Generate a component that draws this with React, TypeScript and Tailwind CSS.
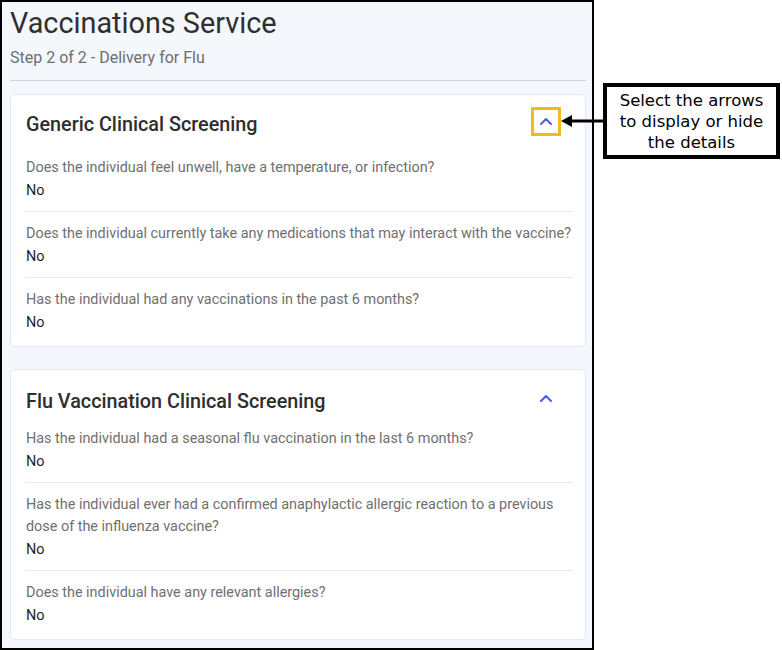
import React from 'react';

interface Question {
  text: string;
  answer: string;
}

interface Section {
  title: string;
  questions: Question[];
  headerClass: string;
}

const sections: Section[] = [
  {
    title: 'Generic Clinical Screening',
    headerClass: 'pt-[16px] mb-[7px]',
    questions: [
      { text: 'Does the individual feel unwell, have a temperature, or infection?', answer: 'No' },
      { text: 'Does the individual currently take any medications that may interact with the vaccine?', answer: 'No' },
      { text: 'Has the individual had any vaccinations in the past 6 months?', answer: 'No' },
    ],
  },
  {
    title: 'Flu Vaccination Clinical Screening',
    headerClass: 'pt-[18px] mb-[1px]',
    questions: [
      { text: 'Has the individual had a seasonal flu vaccination in the last 6 months?', answer: 'No' },
      {
        text: 'Has the individual ever had a confirmed anaphylactic allergic reaction to a previous dose of the influenza vaccine?',
        answer: 'No',
      },
      { text: 'Does the individual have any relevant allergies?', answer: 'No' },
    ],
  },
];

const ChevronUp = () => (
  <svg width="12" height="7" viewBox="0 0 12 7" fill="none">
    <polyline points="1,6 6,1 11,6" stroke="#4d5cf0" strokeWidth="2" strokeLinecap="round" strokeLinejoin="round" />
  </svg>
);

const ScreeningCard: React.FC<{ section: Section; className?: string }> = ({ section, className }) => (
  <section className={`bg-white border border-[#e3e8f1] rounded-[5px] pl-[15px] pr-[12px] pb-[3px] ${className ?? ''}`}>
    <div className={`flex items-start justify-between ${section.headerClass}`}>
      <h2 className="text-[19.8px] leading-[28px] font-medium text-[#2e2e2e]">{section.title}</h2>
      <button className="w-[24px] h-[22px] -mt-[1px] mr-[15px] flex items-center justify-center">
        <ChevronUp />
      </button>
    </div>
    {section.questions.map((q, i) => (
      <div
        key={q.text}
        className={`pt-[11px] pb-[10px] ${i < section.questions.length - 1 ? 'border-b border-[#e6ecf4]' : ''}`}
      >
        <p className="text-[14.4px] leading-[22px] text-[#707070]">{q.text}</p>
        <p className="mt-[2px] text-[14.4px] leading-[20px] text-[#1f1f1f]">{q.answer}</p>
      </div>
    ))}
  </section>
);

export default function App() {
  return (
    <div className="relative w-[782px] h-[650px] bg-white overflow-hidden" style={{ fontFamily: 'Roboto, "Liberation Sans", sans-serif' }}>
      <div className="w-[594px] h-[650px] border-2 border-black bg-[#f4f7fc] pl-[8px] pr-[6px] overflow-hidden">
        <h1 className="pt-[3px] text-[28.8px] leading-[36px] text-[#2f2f2f]">Vaccinations Service</h1>
        <p className="mt-[5px] text-[16px] leading-[24px] text-[#6e6e6e]">Step 2 of 2 - Delivery for Flu</p>
        <div className="mt-[10px] border-t border-[#cfd3d9]" />
        <ScreeningCard section={sections[0]} className="mt-[13px]" />
        <ScreeningCard section={sections[1]} className="mt-[22px]" />
      </div>

      {/* annotation overlay */}
      <div className="absolute left-[531px] top-[107px] w-[30px] h-[29px] border-[3px] border-[#f4b821]" />
      <svg className="absolute left-[560px] top-[114px]" width="46" height="14" viewBox="0 0 46 14">
        <polygon points="1,7 12,1 12,13" fill="#000" />
        <rect x="11" y="5.5" width="35" height="3" fill="#000" />
      </svg>
      <div
        className="absolute left-[603px] top-[83px] w-[177px] h-[76px] border-[4px] border-black bg-white flex items-center justify-center text-center text-[16.5px] leading-[21px] text-black"
        style={{ fontFamily: '"DejaVu Sans", sans-serif' }}
      >
        Select the arrows
        <br />
        to display or hide
        <br />
        the details
      </div>
    </div>
  );
}
